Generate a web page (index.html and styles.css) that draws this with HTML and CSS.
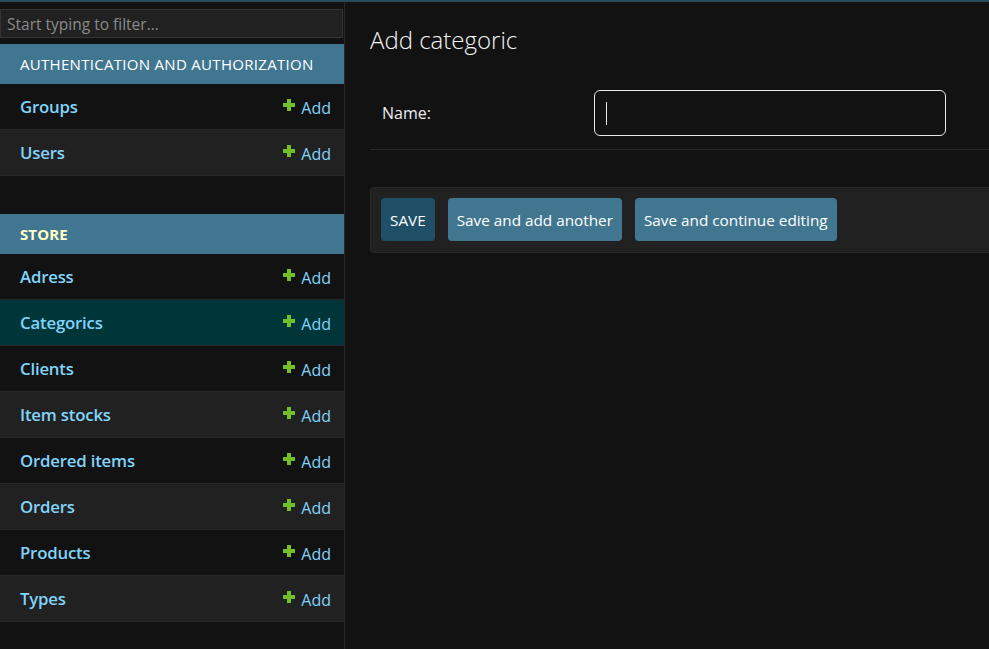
FILE: index.html
```html
<!DOCTYPE html>
<html lang="en">
<head>
<meta charset="utf-8">
<title>Add categoric</title>
<link rel="stylesheet" href="styles.css">
</head>
<body>
<div class="topline"></div>
<div class="layout">
  <nav class="sidebar">
    <input class="filter" type="search" placeholder="Start typing to filter...">
    <div class="module">
      <div class="caption">AUTHENTICATION AND AUTHORIZATION</div>
      <div class="row"><a class="model">Groups</a><a class="add"><span class="plus"></span>Add</a></div>
      <div class="row alt"><a class="model">Users</a><a class="add"><span class="plus"></span>Add</a></div>
    </div>
    <div class="module">
      <div class="caption current">STORE</div>
      <div class="row"><a class="model">Adress</a><a class="add"><span class="plus"></span>Add</a></div>
      <div class="row selected"><a class="model">Categorics</a><a class="add"><span class="plus"></span>Add</a></div>
      <div class="row"><a class="model">Clients</a><a class="add"><span class="plus"></span>Add</a></div>
      <div class="row alt"><a class="model">Item stocks</a><a class="add"><span class="plus"></span>Add</a></div>
      <div class="row"><a class="model">Ordered items</a><a class="add"><span class="plus"></span>Add</a></div>
      <div class="row alt"><a class="model">Orders</a><a class="add"><span class="plus"></span>Add</a></div>
      <div class="row"><a class="model">Products</a><a class="add"><span class="plus"></span>Add</a></div>
      <div class="row alt"><a class="model">Types</a><a class="add"><span class="plus"></span>Add</a></div>
    </div>
  </nav>
  <main class="content">
    <h1>Add categoric</h1>
    <div class="form-row">
      <label class="label">Name:</label>
      <div class="field"><span class="caret"></span></div>
    </div>
    <div class="submit-row">
      <button class="btn default">SAVE</button>
      <button class="btn">Save and add another</button>
      <button class="btn">Save and continue editing</button>
    </div>
  </main>
</div>
</body>
</html>
```

FILE: styles.css
```css
html, body {
  margin: 0;
  padding: 0;
  background: #121212;
  color: #eeeeee;
  font-family: "Open Sans", "Noto Sans", sans-serif;
}
.topline {
  height: 2px;
  background: #264b5d;
}
.layout {
  display: flex;
  min-height: 647px;
}
.sidebar {
  width: 344px;
  flex-shrink: 0;
  border-right: 1px solid #272727;
  padding-top: 7px;
  box-sizing: content-box;
}
.filter {
  display: block;
  box-sizing: border-box;
  width: 343px;
  height: 29px;
  margin: 0 0 6px 0;
  padding: 2px 6px;
  background: #212121;
  border: 1px solid #353535;
  color: #eee;
  font-family: inherit;
  font-size: 15.5px;
  outline: none;
}
.filter::placeholder {
  color: #8a8a8a;
}
.module {
  width: 344px;
  margin-bottom: 38px;
}
.caption {
  height: 40px;
  background: #417690;
  color: #ffffff;
  font-size: 15px;
  display: flex;
  align-items: center;
  padding-left: 20px;
  letter-spacing: 0.3px;
}
.caption.current {
  color: #ffffcc;
  font-weight: 700;
  letter-spacing: 0.1px;
}
.row {
  height: 45px;
  border-bottom: 1px solid #272727;
  display: flex;
  align-items: center;
  justify-content: space-between;
  padding: 0 13px 0 20px;
  background: #121212;
}
.row.alt {
  background: #212121;
}
.row.selected {
  background: #00363a;
}
.model {
  color: #81d4fa;
  font-size: 16.8px;
  font-weight: 600;
  letter-spacing: -0.2px;
}
.add {
  color: #81d4fa;
  font-size: 16px;
  display: flex;
  align-items: center;
  margin-top: 2px;
}
.plus {
  position: relative;
  width: 12px;
  height: 12px;
  margin-right: 6px;
  margin-top: -6px;
}
.plus::before, .plus::after {
  content: "";
  position: absolute;
  background: #70bf2b;
}
.plus::before {
  left: 4px;
  top: 0;
  width: 4px;
  height: 12px;
}
.plus::after {
  left: 0;
  top: 4px;
  width: 12px;
  height: 4px;
}
.content {
  flex: 1;
  padding-left: 25px;
  min-width: 0;
}
h1 {
  margin: 22px 0 0 0;
  font-size: 24px;
  font-weight: 300;
  color: #f5f5f5;
  line-height: 32px;
}
.form-row {
  display: flex;
  align-items: center;
  margin-top: 34px;
  padding-bottom: 13px;
  border-bottom: 1px solid #272727;
}
.label {
  width: 212px;
  padding-left: 12px;
  font-size: 16px;
  color: #eeeeee;
}
.field {
  box-sizing: border-box;
  width: 352px;
  height: 46px;
  border: 1px solid #e8e8e8;
  border-radius: 6px;
  background: #121212;
  display: flex;
  align-items: center;
  padding-left: 11px;
}
.caret {
  width: 1px;
  height: 23px;
  background: #e8e8e8;
}
.submit-row {
  margin-top: 37px;
  background: #212121;
  border: 1px solid #272727;
  border-right: none;
  border-radius: 4px 0 0 4px;
  padding: 10px 10px 11px;
  display: flex;
  gap: 13px;
}
.btn {
  height: 43px;
  border: none;
  border-radius: 4px;
  background: #417690;
  color: #ffffff;
  font-family: inherit;
  font-size: 15.3px;
  padding: 1px 9px 0;
}
.btn.default {
  background: #205067;
}
```
